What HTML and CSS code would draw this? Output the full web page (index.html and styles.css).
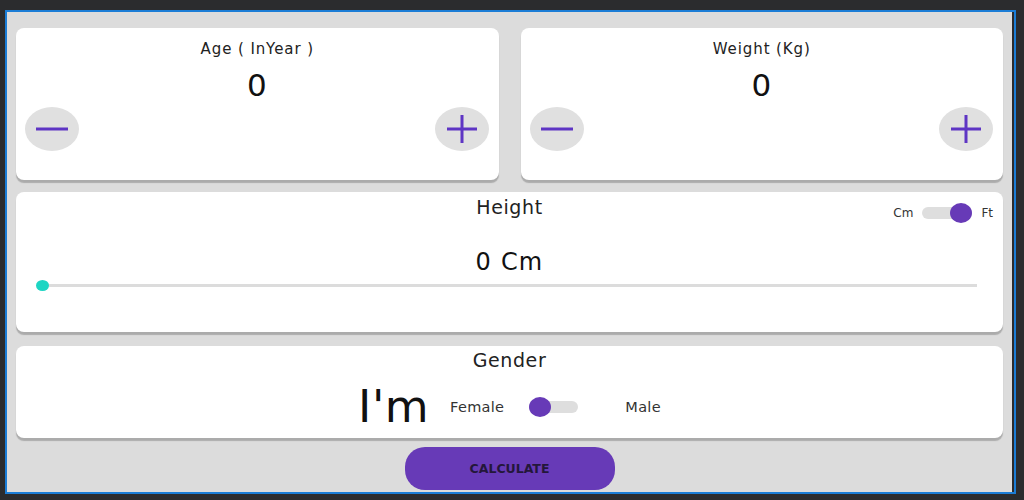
FILE: index.html
```html
<!DOCTYPE html>
<html lang="en">
<head>
<meta charset="utf-8">
<title>BMI Calculator</title>
<link rel="stylesheet" href="styles.css">
</head>
<body>
<div class="frame">
  <div class="top-row">
    <section class="card counter">
      <div class="card-title">Age ( InYear )</div>
      <div class="counter-value">0</div>
      <div class="counter-actions">
        <button class="round-btn" aria-label="Decrease age"><svg width="32" height="4" viewBox="0 0 32 4"><rect x="0" y="0.5" width="32" height="3" fill="#5e35c4"/></svg></button>
        <button class="round-btn" aria-label="Increase age"><svg width="30" height="28" viewBox="0 0 30 28"><rect x="0" y="12.5" width="30" height="3" fill="#5e35c4"/><rect x="13.5" y="0" width="3" height="28" fill="#5e35c4"/></svg></button>
      </div>
    </section>
    <section class="card counter">
      <div class="card-title">Weight (Kg)</div>
      <div class="counter-value">0</div>
      <div class="counter-actions">
        <button class="round-btn" aria-label="Decrease weight"><svg width="32" height="4" viewBox="0 0 32 4"><rect x="0" y="0.5" width="32" height="3" fill="#5e35c4"/></svg></button>
        <button class="round-btn" aria-label="Increase weight"><svg width="30" height="28" viewBox="0 0 30 28"><rect x="0" y="12.5" width="30" height="3" fill="#5e35c4"/><rect x="13.5" y="0" width="3" height="28" fill="#5e35c4"/></svg></button>
      </div>
    </section>
  </div>

  <section class="card height-card">
    <div class="height-head">
      <div class="section-title">Height</div>
      <div class="unit-toggle">
        <span>Cm</span>
        <span class="switch on"><span class="switch-track"></span><span class="switch-thumb"></span></span>
        <span>Ft</span>
      </div>
    </div>
    <div class="height-value">0 Cm</div>
    <div class="slider"><span class="slider-track"></span><span class="slider-thumb"></span></div>
  </section>

  <section class="card gender-card">
    <div class="section-title">Gender</div>
    <div class="gender-row">
      <span class="im">I'm</span>
      <span class="g-label female">Female</span>
      <span class="switch gender-switch"><span class="switch-track"></span><span class="switch-thumb"></span></span>
      <span class="g-label male">Male</span>
    </div>
  </section>

  <button class="calc">CALCULATE</button>
</div>
</body>
</html>
```

FILE: styles.css
```css
html, body {
  margin: 0;
  padding: 0;
}
body {
  background: #2b2c2e;
  width: 1024px;
  height: 500px;
  overflow: hidden;
  font-family: "DejaVu Sans", "Roboto", sans-serif;
  color: #222;
}
.frame {
  box-sizing: border-box;
  width: 1011px;
  height: 484px;
  margin: 10px 0 0 5px;
  border: 2px solid #1b7dd6;
  background: #dcdcdc;
  box-shadow: inset -2px 0 0 #2b2c2e;
  padding: 16px 11px 0 9px;
  display: flex;
  flex-direction: column;
}
.top-row {
  display: grid;
  grid-template-columns: 1fr 1fr;
  column-gap: 22px;
  height: 152px;
}
.card {
  background: #fff;
  border-radius: 8px;
  box-shadow: 0 3px 1px rgba(0, 0, 0, 0.22);
}
.counter {
  padding-top: 13px;
  display: flex;
  flex-direction: column;
}
.card-title {
  font-size: 15px;
  line-height: 16px;
  letter-spacing: 0.9px;
  text-align: center;
  color: #222;
}
.counter-value {
  font-size: 31px;
  line-height: 36px;
  margin-top: 10px;
  letter-spacing: 1px;
  text-align: center;
  color: #111;
}
.counter-actions {
  display: flex;
  justify-content: space-between;
  margin-top: 4px;
  padding: 0 10px 0 9px;
}
.round-btn {
  width: 54px;
  height: 44px;
  border-radius: 50%;
  background: #e0e0e0;
  border: 0;
  padding: 0;
  display: flex;
  align-items: center;
  justify-content: center;
}
.round-btn svg {
  display: block;
}
.height-card {
  margin-top: 12px;
  height: 140px;
  box-sizing: border-box;
  padding-top: 4px;
}
.height-head {
  display: grid;
  grid-template-columns: 1fr auto 1fr;
}
.section-title {
  font-size: 19px;
  line-height: 1.164;
  letter-spacing: 0.6px;
  color: #222;
  text-align: center;
}
.height-head .section-title {
  grid-column: 2;
}
.unit-toggle {
  grid-column: 3;
  justify-self: end;
  align-self: start;
  margin: 7px 10px 0 0;
  display: flex;
  align-items: center;
  gap: 9px;
  font-size: 12px;
  color: #333;
}
.switch {
  position: relative;
  width: 50px;
  height: 20px;
  display: flex;
  align-items: center;
}
.switch-track {
  width: 100%;
  height: 12px;
  border-radius: 6px;
  background: #dedede;
}
.switch-thumb {
  position: absolute;
  top: 0;
  left: 0;
  width: 22px;
  height: 20px;
  border-radius: 50%;
  background: #673ab7;
}
.switch.on .switch-thumb {
  left: auto;
  right: 0;
}
.height-value {
  font-size: 24px;
  line-height: 1.164;
  letter-spacing: 1.2px;
  text-align: center;
  margin-top: 26px;
  color: #111;
}
.slider {
  position: relative;
  height: 11px;
  margin: 3px 26px 0 20px;
  display: flex;
  align-items: center;
}
.slider-track {
  flex: 1;
  height: 3px;
  margin-left: 6px;
  background: #dcdcdc;
}
.slider-thumb {
  position: absolute;
  left: 0;
  top: 0;
  width: 13px;
  height: 11px;
  border-radius: 50%;
  background: #1dd5c3;
}
.gender-card {
  margin-top: 14px;
  height: 92px;
  box-sizing: border-box;
  padding-top: 3px;
}
.gender-row {
  display: flex;
  align-items: center;
  justify-content: center;
  margin-top: 10px;
}
.im {
  font-size: 45px;
  line-height: 52px;
  letter-spacing: 0.5px;
  color: #111;
  margin-right: 21px;
}
.g-label {
  font-size: 14.5px;
  line-height: 1.164;
  letter-spacing: 0.3px;
  color: #333;
}
.gender-switch {
  width: 49px;
  margin: 0 47px 0 25px;
}
.calc {
  margin: 9px auto 0;
  width: 210px;
  height: 43px;
  border-radius: 20px;
  background: #673ab7;
  border: 0;
  padding: 0;
  font-family: "DejaVu Sans", sans-serif;
  font-weight: bold;
  font-size: 12.5px;
  color: #24173a;
}
```
